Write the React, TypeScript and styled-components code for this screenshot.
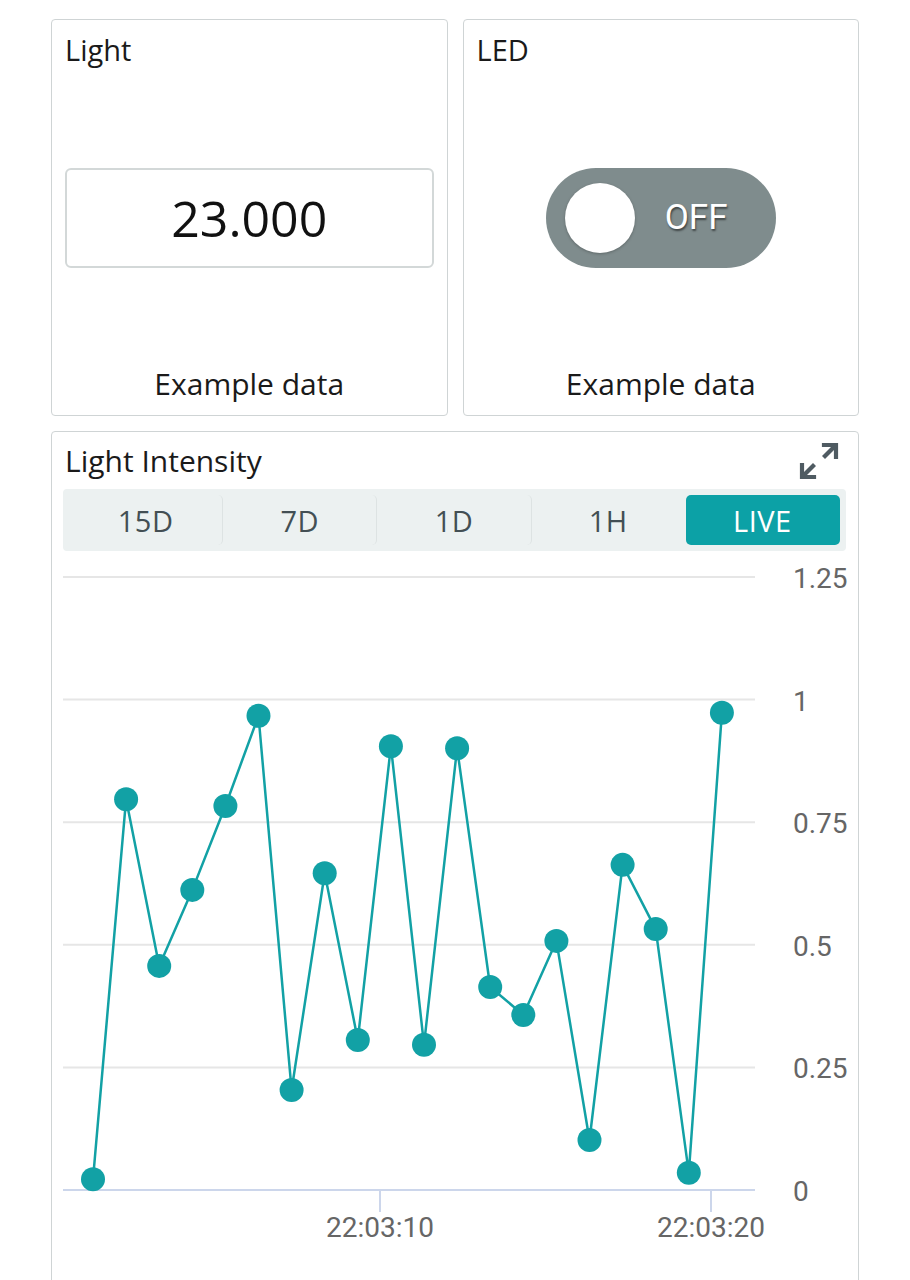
import React from "react";
import styled, { createGlobalStyle } from "styled-components";

const GlobalStyle = createGlobalStyle`
    * { box-sizing: border-box; }
    body {
        margin: 0;
        background: #ffffff;
        font-family: "Open Sans", "Liberation Sans", sans-serif;
        color: #1a1a1a;
    }
`;

const TEAL = "#12a1a5";

const Page = styled.div`
    display: grid;
    grid-template-columns: 1fr 1fr;
    gap: 15px;
    padding: 19px 51px 0 51px;
    width: 910px;
`;

const Card = styled.div<{ $wide?: boolean }>`
    border: 1px solid #cfd4d5;
    border-radius: 4px;
    background: #ffffff;
    ${({ $wide }) => ($wide ? "grid-column: 1 / span 2;" : "height: 397px;")}
`;

const WidgetCard = styled(Card)`
    display: grid;
    grid-template-rows: auto 1fr auto;
`;

const WidgetTitle = styled.div`
    font-size: 29px;
    line-height: 40px;
    padding: 10px 13px 0 13px;
    color: #1a1a1a;
`;

const WidgetBody = styled.div`
    display: flex;
    align-items: center;
    justify-content: center;
    padding: 0 13px;
`;

const WidgetFooter = styled.div`
    font-size: 30px;
    line-height: 38px;
    text-align: center;
    padding-bottom: 12px;
    color: #1a1a1a;
`;

const ValueBox = styled.div`
    width: 100%;
    height: 100px;
    border: 2px solid #d3d8d8;
    border-radius: 6px;
    display: flex;
    align-items: center;
    justify-content: center;
    font-size: 50px;
    color: #111;
`;

const Switch = styled.div`
    width: 230px;
    height: 100px;
    border-radius: 50px;
    background: #7f8c8d;
    display: flex;
    align-items: center;
    padding-left: 19px;
    gap: 30px;
`;

const Knob = styled.div`
    width: 70px;
    height: 70px;
    border-radius: 50%;
    background: #ffffff;
    box-shadow: 0 1px 3px rgba(0, 0, 0, 0.25);
`;

const SwitchLabel = styled.span`
    font-family: Roboto, "Liberation Sans", sans-serif;
    font-size: 35px;
    color: #ffffff;
    text-shadow: 1px 2px 2px rgba(0, 0, 0, 0.5);
`;

const ChartCard = styled(Card)`
    padding: 0 0 0 11px;
    overflow: hidden;
`;

const ChartHeader = styled.div`
    display: flex;
    align-items: center;
    justify-content: space-between;
    padding: 9px 19px 0 2px;
`;

const ChartTitle = styled.div`
    font-size: 30px;
    line-height: 38px;
    color: #1a1a1a;
`;

const ExpandButton = styled.button`
    border: 0;
    background: none;
    padding: 0;
    width: 40px;
    height: 40px;
    display: flex;
    align-items: center;
    justify-content: center;
    cursor: pointer;
`;

const TabBar = styled.div`
    margin: 8px 12px 0 0;
    height: 62px;
    background: #ecf1f1;
    border-radius: 4px;
    padding: 6px;
    display: grid;
    grid-template-columns: repeat(5, 1fr);
`;

const Tab = styled.div<{ $active?: boolean; $divider?: boolean }>`
    display: flex;
    align-items: center;
    justify-content: center;
    font-size: 29px;
    letter-spacing: 0.5px;
    border-radius: 5px;
    color: ${({ $active }) => ($active ? "#ffffff" : "#434f54")};
    background: ${({ $active }) => ($active ? "#0ca1a6" : "transparent")};
    border-right: 1px solid ${({ $divider }) => ($divider ? "#dde3e3" : "transparent")};
`;

const ChartSvg = styled.svg`
    display: block;
    margin-top: 9px;
`;

const ExpandIcon = () => (
    <svg width="40" height="40" viewBox="0 0 40 40" fill="none" stroke="#4f5b62" strokeWidth="4.2" strokeLinecap="square">
        <path d="M25 4 H37 V16" />
        <path d="M36 5 L26 15" />
        <path d="M3 24 V36 H15" />
        <path d="M4 35 L14 25" />
    </svg>
);

const values = [
    0.022, 0.797, 0.457, 0.612, 0.783, 0.967, 0.204, 0.646, 0.306, 0.905,
    0.296, 0.901, 0.414, 0.357, 0.508, 0.102, 0.663, 0.532, 0.035, 0.973,
];

const yTicks = [
    { v: 1.25, label: "1.25" },
    { v: 1, label: "1" },
    { v: 0.75, label: "0.75" },
    { v: 0.5, label: "0.5" },
    { v: 0.25, label: "0.25" },
    { v: 0, label: "0" },
];

const xTicks = [
    { x: 317, label: "22:03:10" },
    { x: 648, label: "22:03:20" },
];

const BASE_Y = 630;
const SCALE = 490.4;
const toY = (v: number) => BASE_Y - v * SCALE;
const toX = (i: number) => 30 + i * 33.1;

const LineChart = () => {
    const points = values.map((v, i) => `${toX(i).toFixed(1)},${toY(v).toFixed(1)}`).join(" ");
    return (
        <ChartSvg width="795" height="730" viewBox="0 0 795 730">
            {yTicks.map((t) => (
                <g key={t.label}>
                    <line
                        x1="0"
                        x2="692"
                        y1={toY(t.v)}
                        y2={toY(t.v)}
                        stroke={t.v === 0 ? "#ccd6eb" : "#e6e6e6"}
                        strokeWidth="2"
                    />
                    <text
                        x="730"
                        y={toY(t.v) + 11}
                        fontFamily="Roboto, 'Liberation Sans', sans-serif"
                        fontSize="28"
                        fill="#666666"
                    >
                        {t.label}
                    </text>
                </g>
            ))}
            {xTicks.map((t) => (
                <g key={t.label}>
                    <line x1={t.x} x2={t.x} y1={BASE_Y} y2={BASE_Y + 22} stroke="#ccd6eb" strokeWidth="2" />
                    <text
                        x={t.x}
                        y={BASE_Y + 47}
                        textAnchor="middle"
                        fontFamily="Roboto, 'Liberation Sans', sans-serif"
                        fontSize="28"
                        fill="#666666"
                    >
                        {t.label}
                    </text>
                </g>
            ))}
            <polyline points={points} fill="none" stroke={TEAL} strokeWidth="2.5" strokeLinejoin="round" />
            {values.map((v, i) => (
                <circle key={i} cx={toX(i)} cy={toY(v)} r="12" fill={TEAL} />
            ))}
        </ChartSvg>
    );
};

const tabs = ["15D", "7D", "1D", "1H", "LIVE"];

export default function App() {
    return (
        <>
            <GlobalStyle />
            <Page>
                <WidgetCard>
                    <WidgetTitle>Light</WidgetTitle>
                    <WidgetBody>
                        <ValueBox>23.000</ValueBox>
                    </WidgetBody>
                    <WidgetFooter>Example data</WidgetFooter>
                </WidgetCard>
                <WidgetCard>
                    <WidgetTitle>LED</WidgetTitle>
                    <WidgetBody>
                        <Switch>
                            <Knob />
                            <SwitchLabel>OFF</SwitchLabel>
                        </Switch>
                    </WidgetBody>
                    <WidgetFooter>Example data</WidgetFooter>
                </WidgetCard>
                <ChartCard $wide>
                    <ChartHeader>
                        <ChartTitle>Light Intensity</ChartTitle>
                        <ExpandButton aria-label="Expand">
                            <ExpandIcon />
                        </ExpandButton>
                    </ChartHeader>
                    <TabBar>
                        {tabs.map((t, i) => (
                            <Tab key={t} $active={t === "LIVE"} $divider={i < 3}>
                                {t}
                            </Tab>
                        ))}
                    </TabBar>
                    <LineChart />
                </ChartCard>
            </Page>
        </>
    );
}
